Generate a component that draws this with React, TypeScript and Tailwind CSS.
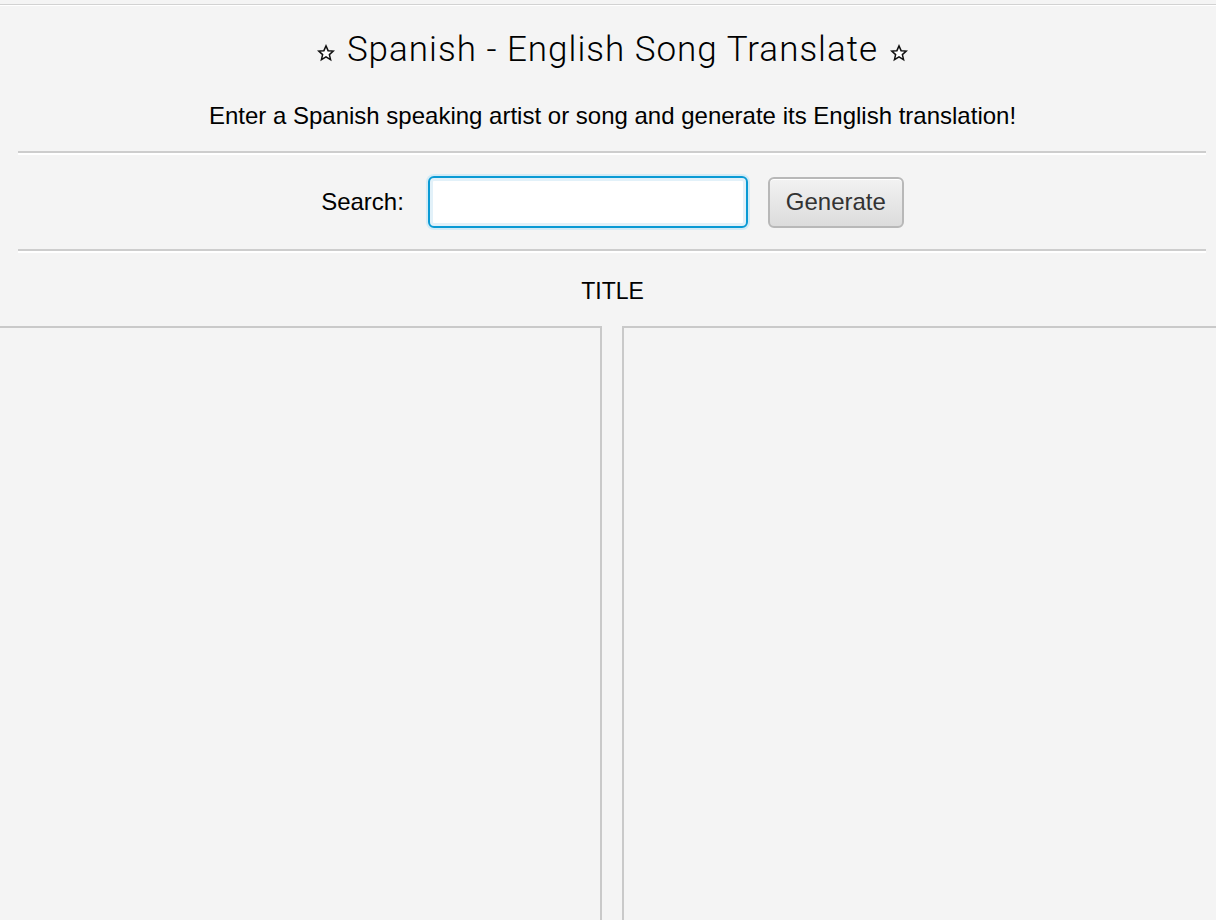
export default function App() {
  return (
    <div className="h-[920px] overflow-hidden bg-[#f4f4f4] flex flex-col text-black" style={{ fontFamily: '"Liberation Sans", Arial, sans-serif' }}>
      <div className="h-[4px]" />
      <div className="h-px bg-[#d2d2d2]" />
      <div className="h-px bg-white" />

      <div className="pl-[9px] flex flex-col">
        <div className="h-[86px] flex items-center justify-center">
          <h1 className="text-[35px] font-light leading-none tracking-[1px] flex items-center gap-[12px]" style={{ fontFamily: 'Roboto, "Liberation Sans", sans-serif' }}>
            <Star />
            <span>Spanish - English Song Translate</span>
            <Star />
          </h1>
        </div>

        <div className="h-[48px] flex items-center justify-center">
          <p className="text-[24px] leading-none">Enter a Spanish speaking artist or song and generate its English translation!</p>
        </div>

        <div className="h-[11px]" />
        <Separator />

        <div className="h-[94px] flex items-center justify-center">
          <label className="text-[24px] leading-none mr-[24px]">Search:</label>
          <input
            type="text"
            className="w-[320px] h-[52px] bg-white rounded-[6px] border-2 border-[#0a9ad4] outline-none px-3 text-[22px] shadow-[0_0_0_2px_#d3ebf6,inset_0_0_0_3px_#e2f1f9]"
          />
          <button className="ml-[20px] w-[136px] h-[51px] rounded-[6px] border-2 border-[#b8b8b8] bg-gradient-to-b from-[#f2f2f2] to-[#dcdcdc] text-[24px] text-[#333] leading-none shadow-[inset_0_1px_0_#ffffff]">
            Generate
          </button>
        </div>

        <Separator />

        <div className="h-[73px] flex items-center justify-center pt-[4px]">
          <span className="text-[23px] leading-none">TITLE</span>
        </div>
      </div>

      <div className="flex-1 flex">
        <div className="w-[602px] border-t-2 border-r-2 border-[#c9c9c9]" />
        <div className="flex-1 ml-[20px] border-t-2 border-l-2 border-[#c9c9c9]" />
      </div>
    </div>
  );
}

function Star() {
  return (
    <svg width="18" height="18" viewBox="0 0 24 24" className="mt-[7px]">
      <path
        d="M12 2.5l2.8 6.4 6.9.6-5.2 4.6 1.6 6.8L12 17.3l-6.1 3.6 1.6-6.8-5.2-4.6 6.9-.6z"
        fill="#ffffff"
        stroke="#111111"
        strokeWidth="2"
        strokeLinejoin="miter"
      />
    </svg>
  );
}

function Separator() {
  return (
    <div className="ml-[9px] mr-[10px]">
      <div className="h-[2px] bg-[#cdcdcd]" />
      <div className="h-[2px] bg-white" />
    </div>
  );
}
